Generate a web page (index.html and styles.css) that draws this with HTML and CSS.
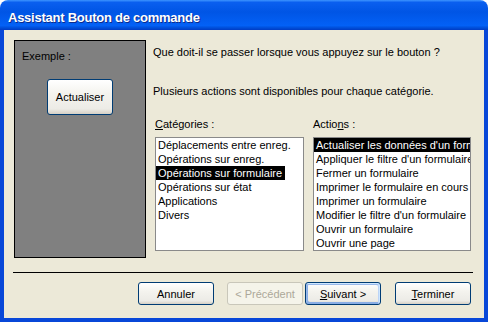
FILE: index.html
```html
<!DOCTYPE html>
<html>
<head>
    <title>Assistant Bouton de commande</title>
    <link rel="stylesheet" href="styles.css">
</head>
<body>
    <div class="window">
        <div class="titlebar">
            <span class="title">Assistant Bouton de commande</span>
        </div>
        <div class="frame">
            <div class="main">
                <div class="preview">
                    <div class="preview-label">Exemple :</div>
                    <div class="btn sample">Actualiser</div>
                </div>
                <div class="content">
                    <p class="question">Que doit-il se passer lorsque vous appuyez sur le bouton ?</p>
                    <p class="hint">Plusieurs actions sont disponibles pour chaque catégorie.</p>
                    <div class="lists">
                        <div class="field categories">
                            <div class="field-label"><u>C</u>atégories :</div>
                            <ul class="listbox">
                                <li><span>Déplacements entre enreg.</span></li>
                                <li><span>Opérations sur enreg.</span></li>
                                <li class="selected"><span>Opérations sur formulaire</span></li>
                                <li><span>Opérations sur état</span></li>
                                <li><span>Applications</span></li>
                                <li><span>Divers</span></li>
                            </ul>
                        </div>
                        <div class="field actions">
                            <div class="field-label">Actio<u>n</u>s :</div>
                            <ul class="listbox">
                                <li class="selected"><span>Actualiser les données d'un formulaire</span></li>
                                <li><span>Appliquer le filtre d'un formulaire</span></li>
                                <li><span>Fermer un formulaire</span></li>
                                <li><span>Imprimer le formulaire en cours</span></li>
                                <li><span>Imprimer un formulaire</span></li>
                                <li><span>Modifier le filtre d'un formulaire</span></li>
                                <li><span>Ouvrir un formulaire</span></li>
                                <li><span>Ouvrir une page</span></li>
                            </ul>
                        </div>
                    </div>
                </div>
            </div>
            <div class="separator"></div>
            <div class="buttons">
                <button class="btn">Annuler</button>
                <button class="btn" disabled>&lt; Précédent</button>
                <button class="btn default"><u>S</u>uivant &gt;</button>
                <button class="btn"><u>T</u>erminer</button>
            </div>
        </div>
    </div>
</body>
</html>
```
FILE: styles.css
```css
body { margin: 0; background: #fff; font-family: "Liberation Sans", Arial, sans-serif; font-size: 11px; color: #000; }

.window { width: 488px; height: 322px; display: flex; flex-direction: column; }

.titlebar { height: 30px; box-sizing: border-box; padding: 4px 0 0 8px; display: flex; align-items: center;
    border-radius: 8px 8px 0 0;
    background: linear-gradient(180deg, #3d95ff 0, #0a5fef 8%, #0055e5 40%, #0361f6 85%, #0050dc 92%, #003cc4 100%); }
.title { color: #fff; font-weight: bold; font-size: 13px; letter-spacing: -0.25px; text-shadow: 1px 1px #0d2c8c; }

.frame { flex: 1; background: #ece9d8; border: 4px solid #0847d8; border-top: none; display: flex; flex-direction: column; }

.main { display: flex; padding: 10px 0 0 10px; }

.preview { width: 132px; height: 218px; box-sizing: border-box; border: 1px solid #000; background: #808080; padding: 8px 0 0 7px; }
.preview-label { line-height: 14px; }
.sample { width: 66px; height: 36px; margin: 16px 0 0 25px; display: flex; align-items: center; justify-content: center; }

.content { margin-left: 7px; }
.question { margin: 5px 0 0; line-height: 14px; }
.hint { margin: 25px 0 0; line-height: 14px; }

.lists { display: flex; gap: 9px; margin-top: 19px; padding-left: 2px; }
.field-label { line-height: 14px; margin-bottom: 6px; }
.field-label u { text-decoration-thickness: 1px; }

.listbox { list-style: none; margin: 0; padding: 0; height: 114px; box-sizing: border-box; border: 1px solid #8a8a8a; background: #fff; overflow: hidden; }
.listbox li { line-height: 14px; height: 14px; white-space: nowrap; }
.listbox span { padding: 0 3px 0 2px; display: inline-block; }
.categories .listbox { width: 149px; }
.actions .listbox { width: 158px; }
.categories .selected span { background: #000; color: #fff; }
.actions .selected { background: #000; color: #fff; }

.separator { height: 1px; background: #000; margin: 14px 0 0 9px; width: 460px; }

.buttons { display: flex; justify-content: flex-end; padding-right: 13px; margin-top: 9px; }
.buttons .btn { width: 76px; height: 23px; margin-left: 13px; }
.buttons .btn:nth-child(3) { margin-left: 2px; }
.buttons .btn:nth-child(4) { margin-left: 14px; }

.btn { box-sizing: border-box; font-family: inherit; font-size: 11px; color: #000; padding: 0;
    border: 1px solid #003c74; border-radius: 3px;
    background: linear-gradient(180deg, #fff 0, #f4f3ee 40%, #ecebe6 85%, #d6d0c5 100%); }
.btn.default { box-shadow: inset -1px 1px #cee7ff, inset 1px 2px #98b8ea, inset -2px 2px #bcd4f6, inset 1px -1px #89ade4, inset 2px -2px #89ade4; }
.btn:disabled { color: #aca899; border-color: #c9c7ba; background: #f5f4ea; }
```
